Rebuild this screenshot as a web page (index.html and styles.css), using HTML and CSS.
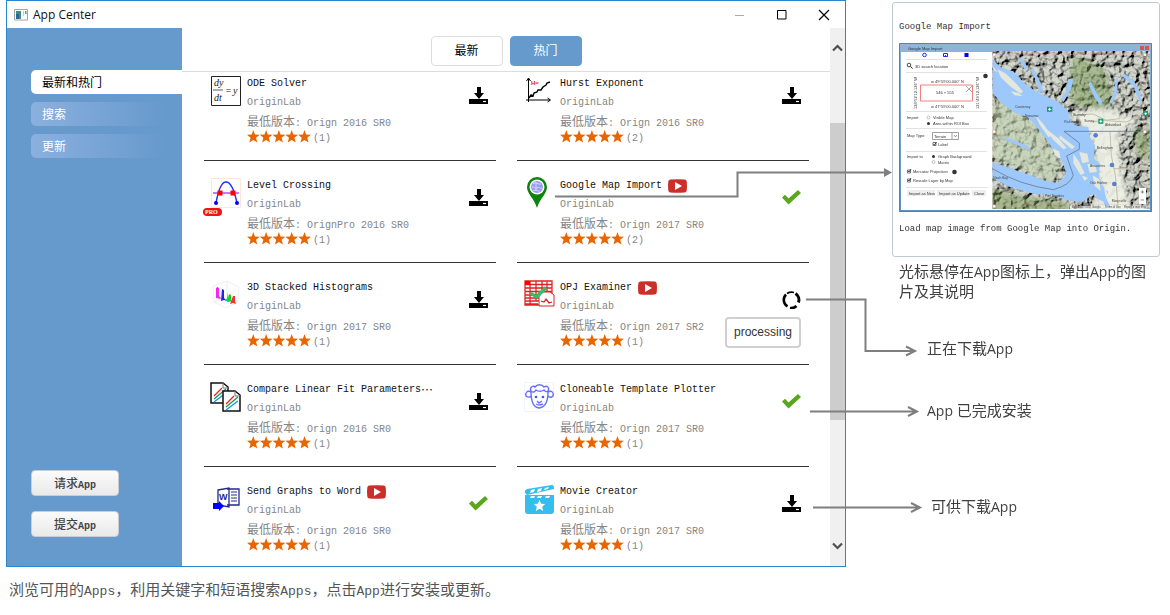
FILE: index.html
```html
<!DOCTYPE html>
<html lang="zh-CN">
<head>
<meta charset="utf-8">
<title>App Center</title>
<link rel="stylesheet" href="styles.css">
</head>
<body>
<svg class="sprite" aria-hidden="true">
  <symbol id="stars" viewBox="0 0 64 13">
    <g fill="#e96500">
      <path id="star" d="M6.3 0 7.9 4.6 12.7 4.8 9 7.8 10.3 12.6 6.3 9.9 2.3 12.6 3.6 7.8 0 4.8 4.7 4.6z"/>
      <use href="#star" x="12.8"/><use href="#star" x="25.6"/><use href="#star" x="38.4"/><use href="#star" x="51.2"/>
    </g>
  </symbol>
  <symbol id="download" viewBox="0 0 19 18">
    <path d="M8 0h4v6h3l-5 6-5-6h3zM0 12h19v5H0z"/>
    <path d="M14 14.500h3" stroke="#fff" stroke-width="1.2"/>
  </symbol>
  <symbol id="check" viewBox="0 0 19 18">
    <path d="M0 8.5 3 5.8 6.5 9.4 16 1 19 4 6.5 15.6z" fill="#5aa61c"/>
  </symbol>
  <symbol id="video" viewBox="0 0 19 14">
    <path d="M2.5.5Q9.500-.2 16.500.5 18.500.7 18.700 2.500 19.200 7 18.700 11.500 18.500 13.300 16.500 13.500 9.500 14.200 2.500 13.500.5 13.300.3 11.500-.2 7 .3 2.500.5.7 2.500.5z" fill="#cb2f29"/>
    <path d="M7 3v8l7-4z" fill="#fff"/>
  </symbol>
</svg>

<div class="figure">
  <section class="window">
    <header class="titlebar">
      <svg width="14" height="12" viewBox="0 0 14 12"><path d="M.5.5h13v10.500H.5z" fill="#fff" stroke="#a3a3a3"/><path d="M2 2h5v8H2z" fill="#3c8f81"/><path d="M2 5h3v5H2z" fill="#31659b"/><path d="M9 2h1v5H9z" fill="#ccc"/><path d="M11 2h1.500v3H11z" fill="#5d9b8e"/></svg>
      <h1>App Center</h1>
      <div class="window-actions">
        <button aria-label="最小化"><svg width="12" height="12"><path d="M1 6.500h9" stroke="#aaa"/></svg></button>
        <button aria-label="最大化"><svg width="12" height="12"><path d="M1.500 1.500h8.500V10H1.500z" fill="none" stroke="#000"/></svg></button>
        <button aria-label="关闭"><svg width="12" height="12"><path d="m1 1 10 10M11 1 1 11" stroke="#000" stroke-width="1.200"/></svg></button>
      </div>
    </header>
    <div class="window-body">
      <aside class="sidebar">
        <nav class="menu">
          <a href="#hot" class="menu-item selected">最新和热门</a>
          <a href="#search" class="menu-item">搜索</a>
          <a href="#update" class="menu-item">更新</a>
        </nav>
        <div class="requests">
          <button class="request">请求<span>App</span></button>
          <button class="request">提交<span>App</span></button>
        </div>
      </aside>
      <main class="content">
        <div class="tabs">
          <button class="tab">最新</button>
          <button class="tab active">热门</button>
        </div>
        <div class="apps">
          <article class="app">
            <svg class="icon" viewBox="0 0 30 30"><path d="M.5.5h29v29H.5z" fill="#fff" stroke="#222"/><g class="formula"><text x="3" y="10">dy</text><text x="3" y="25">dt</text><text x="14" y="18">=</text><text x="22" y="18">y</text></g><path d="M2 14h10" stroke="#333" stroke-width=".8"/></svg>
            <div class="info"><h2>ODE Solver</h2><p class="author">OriginLab</p><p class="version">最低版本<span>: Orign 2016 SR0</span></p><p class="rating"><svg><use href="#stars"/></svg>(1)</p></div>
            <button class="status" aria-label="下载"><svg><use href="#download"/></svg></button>
          </article>
          <article class="app">
            <svg class="icon" viewBox="0 0 30 30"><path d="M4.500 26V3M2.500 5l2-3 2 3M2 24h24M23.500 22l3 2-3 2" fill="none" stroke="#000"/><path d="m5 22 2-3 2 1 1-3 3-1 1-2 3 0 2-3 3-2 1-2 3-1" fill="none" stroke="#000" stroke-width="1.400"/><text x="7" y="9" class="hurst">H=</text></svg>
            <div class="info"><h2>Hurst Exponent</h2><p class="author">OriginLab</p><p class="version">最低版本<span>: Orign 2016 SR0</span></p><p class="rating"><svg><use href="#stars"/></svg>(2)</p></div>
            <button class="status" aria-label="下载"><svg><use href="#download"/></svg></button>
          </article>
          <article class="app">
            <svg class="icon" viewBox="0 0 30 30"><path d="M.5.5h29v29H.5z" fill="#fff" stroke="#fce6da"/><path d="M5 25C10-3 20-3 26 25" fill="none" stroke="#2a2aff" stroke-width="1.400"/><path d="M2 15h26" stroke="#a020f0" stroke-width="1.200"/><path d="M6.500 12.500h5v5h-5zM19.500 12.500h5v5h-5z" fill="red"/><circle cx="5" cy="25" r="2" fill="#00f"/><circle cx="26" cy="25" r="2" fill="#00f"/><rect x="-8" y="30" width="19" height="8" rx="4" fill="#f01414"/><text x="-6" y="36" class="pro">PRO</text></svg>
            <div class="info"><h2>Level Crossing</h2><p class="author">OriginLab</p><p class="version">最低版本<span>: OrignPro 2016 SR0</span></p><p class="rating"><svg><use href="#stars"/></svg>(1)</p></div>
            <button class="status" aria-label="下载"><svg><use href="#download"/></svg></button>
          </article>
          <article class="app">
            <svg class="icon" viewBox="0 0 30 30"><path d="M13 30C10 20 3 16 3 9a10 10 0 0 1 20 0c0 7-7 11-10 21z" fill="#0c830c"/><circle cx="13" cy="9" r="7.500" fill="#fff"/><circle cx="13" cy="9" r="6" fill="#9a9af5"/><path d="M9 6c3-3 5 1 8 0M8 9c3-1 2 3 5 1s2 1 5 0M9 13c4-2 5 1 7 0M12 4v9" fill="none" stroke="#dcdcff"/></svg>
            <div class="info"><h2>Google Map Import <svg><use href="#video"/></svg></h2><p class="author">OriginLab</p><p class="version">最低版本<span>: Orign 2017 SR0</span></p><p class="rating"><svg><use href="#stars"/></svg>(2)</p></div>
            <button class="status" aria-label="已安装"><svg><use href="#check"/></svg></button>
          </article>
          <article class="app">
            <svg class="icon" viewBox="0 0 30 30"><path d="m2 6 14-5 12 6-1 15-12 6L3 22zM16 1v15L3 22M16 16l11 6" fill="#fdfdfd" stroke="#e9e9e9" stroke-width=".7"/><path d="m5 18V8l2-1v9l3 3z" fill="#f02ae6"/><path d="m5 17 1-10 2 1v8l3 3-3-1z" fill="#f02ae6"/><path d="m10 21 1-12 2 1v8l3 3-3-1z" fill="#2222e8"/><path d="m14 21 2-3 1-6v7l3 3z" fill="#09c9d0"/><path d="m16 22 2-8 2 1v5l2 2-3-1z" fill="#10d51b"/><path d="m19 24 3-8h2v5l1 3-3-1z" fill="#f03333"/></svg>
            <div class="info"><h2>3D Stacked Histograms</h2><p class="author">OriginLab</p><p class="version">最低版本<span>: Orign 2017 SR0</span></p><p class="rating"><svg><use href="#stars"/></svg>(1)</p></div>
            <button class="status" aria-label="下载"><svg><use href="#download"/></svg></button>
          </article>
          <article class="app">
            <svg class="icon" viewBox="0 0 30 30"><path d="M1 1h27v20H1zM1 4.500h27M1 8h27M1 11.500h27M1 15h27M1 18h27M6 1v24M12 1v20M18 1v20M23 1v12M1 21v4h14M1 24h13" fill="none" stroke="#e12222" stroke-width="1.300"/><path d="M1 1h5v4H1z" fill="red"/><path d="M15 12h11l4 3v11H15z" fill="#fff" stroke="#e12222"/><path d="m17 21 3 1 2-3 3 4 3-1" fill="none" stroke="#c22" stroke-width="1.300"/><path d="m5 14 3-2 4 3 9-9 2 3-10 10z" fill="#35bd6d"/></svg>
            <div class="info"><h2>OPJ Examiner <svg><use href="#video"/></svg></h2><p class="author">OriginLab</p><p class="version">最低版本<span>: Orign 2017 SR2</span></p><p class="rating"><svg><use href="#stars"/></svg>(1)</p></div>
            <button class="status" aria-label="正在下载"><svg viewBox="0 0 19 18"><g fill="none" stroke="#000"><path d="M4 3.500A7.700 7.700 0 0 0 5.500 15.500" stroke-width="2.600"/><path d="M5 2.500Q8.500.5 12 1.500" stroke-width="1.800"/><path d="M13.500 2.500A7.700 7.700 0 0 1 16.500 11.500" stroke-width="3"/><path d="M8 17A7.700 7.700 0 0 0 14.500 15" stroke-width="2.600"/></g></svg></button>
            <span class="tooltip" role="tooltip">processing</span>
          </article>
          <article class="app">
            <svg class="icon" viewBox="0 0 30 30"><g id="sheet"><path d="M0 1h12l5 4v16H0z" fill="#fff" stroke="#111" stroke-width="1.500"/><path d="M12 1v5h5" fill="none" stroke="#777"/><path d="m3 14 8-8" stroke="#e22" stroke-width="1.300"/><path d="m3 17 12-10" stroke="#1a9850" stroke-width="1.300"/><path d="m3 20 12-9" stroke="#1597e5" stroke-width="1.300"/></g><use href="#sheet" x="12" y="8"/></svg>
            <div class="info"><h2>Compare Linear Fit Parameters<span>…</span></h2><p class="author">OriginLab</p><p class="version">最低版本<span>: Orign 2016 SR0</span></p><p class="rating"><svg><use href="#stars"/></svg>(1)</p></div>
            <button class="status" aria-label="下载"><svg><use href="#download"/></svg></button>
          </article>
          <article class="app">
            <svg class="icon" viewBox="0 0 30 30"><path d="M.5.5h29v29H.5z" fill="#fff" stroke="#f0f4fc"/><path d="M7 9C5 5 10 3 11 5c2-3 7-3 9 0 3-2 6 1 4 4M7 9c2 2 4 1 5-1 3 2 5 2 8 0 1 2 3 2 4 1M7 10C3 8 1 11 2 14c2 2 4 1 5 0M24 10c4-2 6 1 5 4-2 2-4 1-5 0M7 10c0 7 1 15 8 16 8-1 9-9 9-16M13 19l2 2 3-2M12 22q3 2 7 0" fill="none" stroke="#6870ff" stroke-width="1.400"/><circle cx="12" cy="15" r="1.300" fill="#4450ff"/><circle cx="19" cy="15" r="1.300" fill="#4450ff"/></svg>
            <div class="info"><h2>Cloneable Template Plotter</h2><p class="author">OriginLab</p><p class="version">最低版本<span>: Orign 2017 SR0</span></p><p class="rating"><svg><use href="#stars"/></svg>(1)</p></div>
            <button class="status" aria-label="已安装"><svg><use href="#check"/></svg></button>
          </article>
          <article class="app">
            <svg class="icon" viewBox="0 0 30 30"><path d="M16 5h12v16H16M7 6l11-2v19L7 21z" fill="#fff" stroke="#262690" stroke-width="1.300"/><path d="M20 8h6M20 11h6M20 14h6M20 17h6" stroke="#262690"/><text x="8" y="16" class="word">W</text><path d="M2 19h6v-2l5 5-5 5v-2H2z" fill="#00f"/></svg>
            <div class="info"><h2>Send Graphs to Word <svg><use href="#video"/></svg></h2><p class="author">OriginLab</p><p class="version">最低版本<span>: Orign 2016 SR0</span></p><p class="rating"><svg><use href="#stars"/></svg>(1)</p></div>
            <button class="status" aria-label="已安装"><svg><use href="#check"/></svg></button>
          </article>
          <article class="app">
            <svg class="icon" viewBox="0 0 30 30"><path d="M1 11h29v16q0 3-3 3H4q-3 0-3-3zM1 9Q0 6 3 5L28 1q2 0 2 4L3 11z" fill="#35bdf0"/><path d="m7 6 4-1-1 3-4 1zM14 5l4-1-1 3-4 1zM21 4l4-1-1 2-4 1zM7 12h4l-1 2H6zM14 12h4l-1 2h-4zM22 12h4l-1 2h-4zM15.500 16l1.700 3.700 4 .3-3 2.700 1 4.300-3.700-2.300-3.700 2.300 1-4.300-3-2.700 4-.3z" fill="#fff"/></svg>
            <div class="info"><h2>Movie Creator</h2><p class="author">OriginLab</p><p class="version">最低版本<span>: Orign 2017 SR0</span></p><p class="rating"><svg><use href="#stars"/></svg>(1)</p></div>
            <button class="status" aria-label="下载"><svg><use href="#download"/></svg></button>
          </article>
        </div>
      </main>
      <div class="scrollbar" aria-hidden="true">
        <svg width="11" height="8"><path d="m1 6.500 4.500-4.500L10 6.500" fill="none" stroke="#505050" stroke-width="2.200"/></svg>
        <div class="track"><div class="thumb"></div></div>
        <svg width="11" height="8"><path d="m1 1.500 4.500 4.500L10 1.500" fill="none" stroke="#505050" stroke-width="2.200"/></svg>
      </div>
    </div>
  </section>

  <aside class="notes">
    <section class="popup">
      <h3>Google Map Import</h3>
      <svg class="preview" viewBox="0 0 253 169" role="img" aria-label="Google Map Import">
        <defs>
          <linearGradient id="bar" x2="0" y2="1"><stop stop-color="#8fb5d8"/><stop offset="1" stop-color="#5c93c4"/></linearGradient>
          <filter id="relief" x="0" y="0" width="1" height="1"><feTurbulence type="fractalNoise" baseFrequency=".045" numOctaves="3" seed="8"/><feDiffuseLighting surfaceScale="26" lighting-color="#cfd3c9" diffuseConstant="1.1"><feDistantLight azimuth="220" elevation="55"/></feDiffuseLighting></filter>
          <filter id="soft" x="-20%" y="-20%" width="140%" height="140%"><feGaussianBlur stdDeviation="7"/></filter>
          <clipPath id="mapclip"><path d="M7 27h473v474H7z"/></clipPath>
        </defs>
        <path d="M0 0h253v169H0z" fill="url(#bar)"/>
        <path d="M2 9h249v158H2z" fill="#fff"/>
        <g transform="translate(91 -1) scale(.3333)" clip-path="url(#mapclip)">
          <path d="M7 27h473v474H7z" fill="#b5b9ad" filter="url(#relief)"/>
          <g filter="url(#soft)">
            <path d="M7 170 70 190 150 260 200 340 215 400 170 420 90 380 7 350z" fill="#c5d5b2" opacity=".65"/>
            <path d="M250 40 300 60 340 80 370 160 350 205 250 190 235 130zM430 260h50v100l-40-20z" fill="#7d9d55" opacity=".5"/>
            <path d="M7 440l110 25 120 15v30H7z" fill="#7f9c55" opacity=".5"/>
            <path d="M240 210 340 200 450 235 390 265 385 340 400 400 420 500H310l20-70-15-100-25-65z" fill="#eef0e5" opacity=".95"/>
          </g>
          <g fill="#9dc8fb">
            <path d="M7 50 30 75 70 88 105 125 140 150 180 168 205 180 222 195 235 210 240 232 255 250 295 255 300 285 315 310 312 350 330 365 326 400 335 430 355 450 345 470 325 480 315 455 300 460 280 480 230 475 190 460 130 455 60 435 7 408V360l40 14 70 24 60 22 30 2 22-24-10-36-22-30-28-40-34-44-22-22-38-14-40-28L7 152z"/>
            <path d="M145 150v-18l-22-48 8-4 22 45 8 24zM235 110l-8 40-14 22 8 8 22-38 8-32zM400 92l32 25 18 35 5 35-12-20-12-34-34-30zM300 115l20 38 16 24-2 16-20-26-18-38zM385 110l-5 46-16 28-6-4 14-30 6-42z"/>
            <path d="m45 285 65 25 18 18-35-14-50-22zM320 430l25 32 18 35-16-5-24-30zM95 45l20 35-10 4-18-34z"/>
          </g>
          <g fill="#e4e8dc">
            <path d="m22 82 24 12 30 28 24 28-10 4-28-20-30-28zM62 148l24 5 12 10-24-3zM8 70l14 20-10-4zM136 220l26 28 22 34-8 4-26-36zM170 262l34 26 26 30-10 4-32-30zM210 280l44 34-8 8-38-32z"/>
            <path d="m250 336 18 24 16 34-12 5-22-36zM268 330l24 5 5 24-20 5zM292 365l24 5 5 20-22 2zM275 400l20 8-12 8zM308 400l20 12 4 35-18-15zM322 325l26 12-6 24-18-5zM190 320l18 8 4 22-18-10zM322 470l20 10-8 14zM340 420l14 40-8 2z"/>
          </g>
          <path d="M7 380Q90 430 190 443 240 430 250 400L230 342 268 322V303L222 268H480" fill="none" stroke="#677c94" stroke-width="2.500"/>
          <path d="M12 37h452v450H12z" fill="none" stroke="#ed8c8c" stroke-dasharray="5 4"/>
          <path d="M250 220 310 216 350 236 410 240 470 210M360 270l4 70 12 60 8 90M300 240l90-10M370 380l110 2" fill="none" stroke="#c2bfa9" stroke-width="3"/>
          <g fill="#159477"><path d="M171 194h16v15h-16zM325 230h15v15h-15zM460 207h14v15h-14z"/></g>
          <path d="M174 202h10M179 197v9M328 238h9M332.500 233v9M463 215h8M467 211v8" stroke="#fff" stroke-width="3"/>
          <g fill="#5680c8"><circle cx="317" cy="280" r="7"/><circle cx="366" cy="369" r="7"/><circle cx="373" cy="426" r="7"/></g>
          <g class="places"><text x="75" y="199">Courtenay</text><text x="105" y="224">Nanaimo</text><text x="222" y="197">Vancouver</text><text x="250" y="223">Burnaby</text><text x="223" y="243">Richmond</text><text x="283" y="240">Surrey</text><text x="345" y="251">Abbotsford</text><text x="320" y="320">Bellingham</text><text x="196" y="390">Victoria</text><text x="300" y="374">Anacortes</text><text x="300" y="425">Oak Harbor</text><text x="10" y="410">Neah Bay</text><text x="165" y="465">Port Angeles</text><text x="365" y="480">Marysville</text></g>
          <path d="M240 491h240v10H240z" fill="#f3f3ef" opacity=".7"/>
          <g class="credits"><text x="245" y="499">Map data ©2017 Google</text><text x="345" y="499">Terms of Use</text><text x="402" y="499">Report a map error</text></g>
          <path d="M447 438h21v48h-21z" fill="#fff"/><path d="M452 450h10M457 445v10M452 474h10" stroke="#555" stroke-width="2"/>
          <path d="M8 34h9v8H8zM460 34h9v8h-9zM8 265h9v8H8zM460 265h9v8h-9zM8 489h9v8H8z" fill="#fff" stroke="#e06060"/>
        </g>
        <path d="M241 3h4v4h-4zM246 3h4v4h-4z" fill="#d9534f"/>
        <g class="dialog">
          <text x="9" y="6.500">Google Map Import</text>
          <circle cx="25.500" cy="12" r="1.800" fill="none" stroke="#22f"/><path d="M44.500 10.500h4v3h-4zM46 12.500h1" fill="none" stroke="#22f"/><path d="M65.500 10h4v4h-4z" fill="#00f"/>
          <circle cx="10" cy="22" r="1.800" fill="none" stroke="#222" stroke-width=".8"/><path d="m11.500 23.500 2.200 2" stroke="#222"/>
          <text x="16" y="25">3D search location</text>
          <path d="M7 16.500h81M7 29.500h81M7 68.500h81M7 85.500h81M7 108.500h81M7 144.500h81" stroke="#e2e2e2"/>
          <path d="M21.500 42h52v16h-52z" fill="#fff" stroke="#f08080"/><path d="m67 43 6 6m0-6-6 6" stroke="#888" stroke-width=".7"/>
          <text x="32" y="40">w 49°59'00.000" N</text><text x="37" y="51">546 × 555</text><text x="32" y="65">w 47°59'00.000" N</text>
          <text transform="translate(18 66) rotate(-90)">124°52'12.126" W</text><text transform="translate(80 66) rotate(-90)">121°49'12.126" W</text>
          <circle cx="86.500" cy="33" r="2.300"/>
          <text x="8" y="76">Import</text><text x="34" y="76">Visible Map</text><text x="34" y="82">Area within ROI Box</text>
          <circle cx="29.500" cy="74.500" r="1.500" fill="#fff" stroke="#888" stroke-width=".5"/><circle cx="29.500" cy="80.500" r="1.500"/>
          <text x="8" y="94">Map Type</text><path d="M33.500 89.500h26v7h-26zM53 90v6M55 92l1.500 2 1.500-2" fill="none" stroke="#777" stroke-width=".7"/><text x="35" y="95">Terrain</text><text x="39" y="103">Label</text>
          <text x="8" y="115">Import to</text><text x="39" y="115">Graph Background</text><text x="39" y="121">Matrix</text><circle cx="34.500" cy="113.500" r="1.500"/><circle cx="34.500" cy="119" r="1.500" fill="#fff" stroke="#888" stroke-width=".5"/>
          <text x="14" y="130">Mercator Projection</text><circle cx="55.500" cy="129" r="2.300"/><text x="14" y="139">Rescale Layer by Map</text>
          <path d="M34 99.500h3v3h-3zM8.500 127h3v3h-3zM8.500 136h3v3h-3z" fill="#fff" stroke="#444" stroke-width=".7"/><path d="m34.500 101 1 1 2-3M9 128l1 1 2-3M9 137l1 1 2-3" fill="none" stroke="#222" stroke-width=".8"/>
          <path d="M8 147h28v6H8zM38 147h32v6H38zM73 147h14v6H73z" fill="#eee"/><text x="10" y="151.500">Import as New</text><text x="40" y="151.500">Import as Update</text><text x="75" y="151.500">Close</text>
        </g>
        <path d="M.5.5h252v168H.5z" fill="none" stroke="#4b87ad"/>
      </svg>
      <p>Load map image from Google Map into Origin.</p>
    </section>
    <p class="hint">光标悬停在<span>App</span>图标上，弹出<span>App</span>的图片及其说明</p>
    <p class="label downloading">正在下载<span>App</span></p>
    <p class="label installed"><span>App </span>已完成安装</p>
    <p class="label available">可供下载<span>App</span></p>
  </aside>

  <svg class="connectors" viewBox="555 0 615 568" aria-hidden="true">
    <g fill="none" stroke="#7f7f7f" stroke-width="2">
      <path d="M555 196.500h182.500V172.500H886"/>
      <path d="M806 299.500h59.500V351H914M906 346.500l9 4.500-9 4.500"/>
      <path d="M810 411.500h106M908 407l9 4.500-9 4.500"/>
      <path d="M813 507.500h106M911 503l9 4.500-9 4.500"/>
    </g>
    <path d="m884 168 8 4.500-8 4.500z" fill="#7f7f7f"/>
  </svg>
</div>
<p class="caption">浏览可用的<span>Apps</span>，利用关键字和短语搜索<span>Apps</span>，点击<span>App</span>进行安装或更新。</p>
</body>
</html>
```

FILE: styles.css
```css
* { box-sizing: border-box; }
body { margin: 0; background: #fff; color: #333; font-family: "Noto Sans CJK SC", sans-serif; font-size: 12px; }
h1, h2, h3, p { margin: 0; font-weight: normal; }
button { font: inherit; color: inherit; padding: 0; border: 0; background: none; cursor: pointer; }
.sprite { position: absolute; width: 0; height: 0; }

.figure { position: relative; display: flex; align-items: stretch; padding-left: 6px; }
.window { flex: 1; min-width: 0; display: flex; flex-direction: column; border: 1px solid #2a86cf; }
.titlebar { display: flex; align-items: center; gap: 5px; height: 27px; padding: 0 15px 0 7px; }
.titlebar h1 { flex: 1; color: #111; font: 12px/20px "Open Sans", sans-serif; }
.window-actions { display: flex; gap: 30px; }
.window-actions button { width: 12px; height: 12px; }
.window-actions svg, .status svg, .scrollbar svg { display: block; }
.window-body { flex: 1; display: flex; }

.sidebar { flex: 0 0 175px; display: flex; flex-direction: column; justify-content: space-between; padding: 42px 0 29px 24px; background: #6699cc; }
.menu { display: flex; flex-direction: column; gap: 8px; }
.menu-item { padding-left: 11px; border-radius: 5px 0 0 5px; color: #fff; line-height: 23px; height: 24px; text-decoration: none; background: linear-gradient(to right, #8bb0df, #6699cc 90%); }
.menu-item.selected { color: #000; background: #fff; }
.requests { display: flex; flex-direction: column; align-items: flex-start; gap: 15px; }
.request { width: 88px; height: 26px; border: 1px solid #c9cdd2; border-radius: 4px; background: linear-gradient(#fbfbfb, #e9e9e9); color: #444; font-weight: 500; line-height: 20px; }
.request span { font: bold 10px/1 "Liberation Mono", monospace; }

.content { flex: 1; min-width: 0; }
.tabs { display: flex; justify-content: center; gap: 7px; height: 44px; padding-top: 8px; border-bottom: 1px solid #ddd; }
.tab { width: 72px; height: 30px; border: 1px solid #ddd; border-radius: 4px; background: #fff; color: #000; line-height: 20px; padding-bottom: 2px; }
.tab.active { border-color: #6699cc; background: #6699cc; color: #fff; }

.apps { display: grid; grid-template-columns: 1fr 1fr; column-gap: 21px; padding: 0 21px 0 22px; }
.app { position: relative; display: flex; height: 102px; padding: 16px 8px 0 7px; border-bottom: 1px solid #333; }
.app:nth-child(-n+2) { height: 89px; padding-top: 3px; }
.app:nth-last-child(-n+2) { height: auto; border: 0; }
.icon { flex: none; width: 30px; height: 30px; margin: 1px 6px 0 0; overflow: visible; }
.formula { font: italic 10px "Liberation Serif", serif; fill: #222; }
.hurst { font: bold 6px "Liberation Sans", sans-serif; fill: #e01212; }
.pro { font: bold 6px "Liberation Serif", serif; fill: #fff; }
.word { font: bold 9px "Liberation Sans", sans-serif; fill: #262690; }
.info { flex: 1; min-width: 0; color: #858585; font-family: "Liberation Mono", "Noto Sans CJK SC", monospace; font-size: 10px; }
.info h2 { display: flex; align-items: center; height: 17px; color: #111; font-size: 10px; white-space: pre; }
.info h2 svg { width: 19px; height: 14px; }
.info h2 span { font: 12px/16px "Noto Sans CJK SC", sans-serif; }
.author { padding-top: 1px; line-height: 20px; }
.version { height: 17px; font: 12px/15px "Noto Sans CJK SC", sans-serif; }
.version span { font: 10px/1 "Liberation Mono", monospace; }
.rating { display: flex; gap: 2px; height: 14px; line-height: 18px; }
.rating svg { width: 64px; height: 13px; }
.status { align-self: flex-start; width: 19px; height: 18px; margin-top: 12px; }
.status svg { width: 19px; height: 18px; }
.tooltip { position: absolute; right: 8px; top: 54px; padding: 0 7px; border: 2px solid #d0d0d0; border-radius: 4px; background: #fff; color: #333; font: 12px/27px "Liberation Sans", sans-serif; }

.scrollbar { flex: 0 0 15px; display: flex; flex-direction: column; align-items: center; padding: 16px 0; background: #f0f0f0; }
.track { flex: 1; width: 100%; padding: 71px 0 122px; }
.thumb { height: 100%; background: #cdcdcd; }

.notes { flex: 0 0 324px; padding: 2px 10px 0 46px; }
.popup { padding: 14px 7px 17px 6px; border: 1px solid #c4cbcf; border-radius: 3px; font: 9px/20px "Liberation Mono", monospace; }
.popup h3 { font-size: 9px; }
.preview { display: block; width: 253px; height: 169px; margin: 6px 0 7px; }
.dialog { font: 4px "Liberation Sans", sans-serif; fill: #333; }
.places { font: 10px "Liberation Sans", sans-serif; fill: #444; }
.credits { font: 8px "Liberation Sans", sans-serif; fill: #444; }
.hint, .label { color: #404040; font-size: 15px; line-height: 20px; }
.hint { margin: 4px 10px 0 7px; }
.hint span, .label span { font: 14px/1 "Open Sans", sans-serif; }
.label { padding-left: 35px; white-space: pre; }
.downloading { margin-top: 37px; }
.installed { margin-top: 42px; }
.available { margin: 76px 0 51px; padding-left: 39px; }
.connectors { position: absolute; top: 0; right: 0; width: 615px; height: 568px; pointer-events: none; }
.caption { padding: 12px 9px; color: #555; font-size: 15px; line-height: 20px; }
.caption span { font: 13px/1 "Liberation Mono", monospace; }
```
